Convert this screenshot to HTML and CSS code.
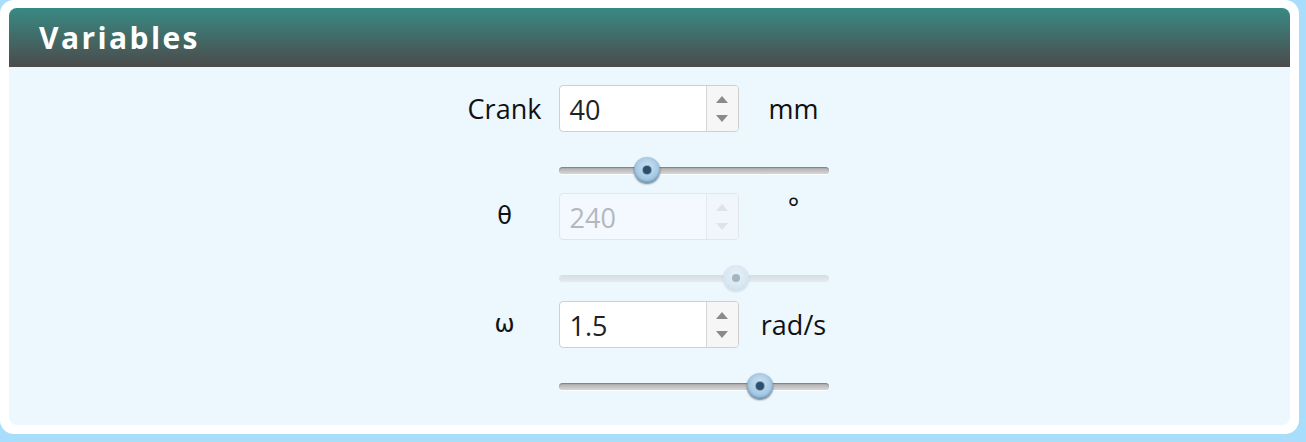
FILE: index.html
```html
<!DOCTYPE html>
<html>
<head>
<meta charset="utf-8">
<link rel="stylesheet" href="styles.css">
</head>
<body>
<div class="frame">
  <section class="panel">
    <header class="panel-head"><h1>Variables</h1></header>
    <div class="panel-body">
      <div class="vars">
        <div class="label">Crank</div>
        <div class="num">
          <span class="num-val">40</span>
          <span class="spin"><i class="up"></i><i class="down"></i></span>
        </div>
        <div class="unit">mm</div>
        <div class="slider"><div class="track"></div><div class="thumb" style="left: 88px"></div></div>

        <div class="label greek">θ</div>
        <div class="num disabled">
          <span class="num-val">240</span>
          <span class="spin"><i class="up"></i><i class="down"></i></span>
        </div>
        <div class="unit deg">°</div>
        <div class="slider disabled"><div class="track"></div><div class="thumb" style="left: 177px"></div></div>

        <div class="label greek">ω</div>
        <div class="num">
          <span class="num-val">1.5</span>
          <span class="spin"><i class="up"></i><i class="down"></i></span>
        </div>
        <div class="unit">rad/s</div>
        <div class="slider"><div class="track"></div><div class="thumb" style="left: 201px"></div></div>
      </div>
    </div>
  </section>
</div>
</body>
</html>
```
FILE: styles.css
```css
html, body {
  margin: 0;
  padding: 0;
  background: #a8ddfc;
  width: 1306px;
  height: 442px;
  overflow: hidden;
}
.frame {
  box-sizing: border-box;
  width: 1299px;
  height: 434px;
  background: #ffffff;
  border-radius: 14px;
  padding: 8px 9px 9px 9px;
}
.panel {
  height: 100%;
  background: #ecf7fe;
  border-radius: 8px;
  overflow: hidden;
  display: flex;
  flex-direction: column;
}
.panel-head {
  height: 59px;
  background: linear-gradient(#388a84, #4b4b4b);
  display: flex;
  align-items: center;
  padding-left: 30px;
}
.panel-head h1 {
  margin: 0;
  font-family: "Open Sans", sans-serif;
  font-weight: 700;
  font-size: 30px;
  letter-spacing: 2.4px;
  color: #ffffff;
  line-height: 1;
}
.panel-body {
  flex: 1;
  display: flex;
  justify-content: center;
  padding-top: 18px;
}
.vars {
  display: grid;
  grid-template-columns: 88px 180px 90px;
  column-gap: 10px;
  align-items: center;
  align-content: start;
  font-family: "Open Sans", sans-serif;
  color: #111;
}
.label, .unit {
  text-align: center;
  font-size: 27px;
  line-height: 47px;
}
.greek {
  font-family: "DejaVu Sans", sans-serif;
  font-size: 24px;
}
.deg {
  line-height: 30px;
  align-self: start;
}
.num {
  box-sizing: border-box;
  height: 47px;
  background: #fff;
  border: 1px solid #cfcfcf;
  border-radius: 4px;
  display: flex;
  align-items: stretch;
}
.num-val {
  flex: 1;
  padding-left: 10px;
  font-size: 27px;
  line-height: 47px;
  color: #222;
}
.spin {
  width: 31px;
  border-left: 1px solid #d6d6d6;
  background: #f6f6f6;
  border-radius: 0 3px 3px 0;
  display: flex;
  flex-direction: column;
  align-items: center;
  justify-content: center;
  gap: 12px;
}
.spin i {
  width: 0;
  height: 0;
  border-left: 6px solid transparent;
  border-right: 6px solid transparent;
}
.spin .up { border-bottom: 7px solid #8a8a8a; }
.spin .down { border-top: 7px solid #8a8a8a; }
.num.disabled {
  background: #f3f9fe;
  border-color: #dfe6ec;
}
.num.disabled .num-val { color: #b3b8bd; }
.num.disabled .spin { background: #f0f6fb; border-left-color: #e3e9ee; }
.num.disabled .spin .up { border-bottom-color: #dde3e8; }
.num.disabled .spin .down { border-top-color: #dde3e8; }

.slider {
  grid-column: 2 / 4;
  position: relative;
  width: 270px;
  height: 26px;
  margin: 25px 0 10px;
}
.track {
  position: absolute;
  left: 0;
  right: 0;
  top: 10px;
  height: 7px;
  border-radius: 4px;
  background: linear-gradient(#a9a9a9, #d7d7d7);
  box-shadow: inset 0 1px 1px rgba(0,0,0,0.25), 0 1px 0 rgba(255,255,255,0.6);
}
.thumb {
  position: absolute;
  top: 0;
  width: 26px;
  height: 26px;
  margin-left: -13px;
  border-radius: 50%;
  box-sizing: border-box;
  background: radial-gradient(circle at 50% 40%, #cfe4f3 0%, #a6c9e4 55%, #6f9bc0 100%);
  box-shadow: 0 1px 2px rgba(0,0,0,0.5), inset 0 -1px 2px rgba(40,70,100,0.4);
}
.thumb::after {
  content: "";
  position: absolute;
  left: 50%;
  top: 50%;
  width: 8px;
  height: 8px;
  margin: -4px 0 0 -4px;
  border-radius: 50%;
  background: #2e4f6c;
  box-shadow: 0 0 0 1px rgba(90,130,165,0.6);
}
.slider.disabled .track {
  background: linear-gradient(#d6dde3, #e6ebef);
  box-shadow: none;
}
.slider.disabled .thumb {
  background: radial-gradient(circle at 50% 40%, #e8f1f8 0%, #d6e6f2 60%, #c3d7e7 100%);
  box-shadow: 0 1px 2px rgba(0,0,0,0.12);
}
.slider.disabled .thumb::after { background: #a4b4c2; box-shadow: none; }
```
